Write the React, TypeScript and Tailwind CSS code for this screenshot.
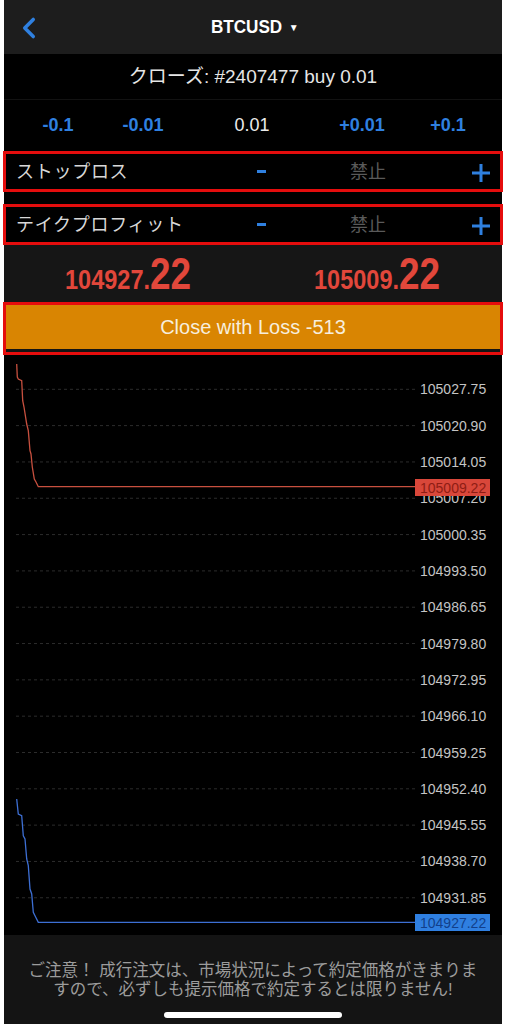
import { ChevronLeft } from 'lucide-react';

const jp = { fontFamily: '"Liberation Sans", "Noto Sans CJK JP", sans-serif' };
const sans = { fontFamily: '"Liberation Sans", Arial, sans-serif' };

const axis = [
  '105027.75', '105020.90', '105014.05', '105007.20', '105000.35',
  '104993.50', '104986.65', '104979.80', '104972.95', '104966.10',
  '104959.25', '104952.40', '104945.55', '104938.70', '104931.85',
];

const askLine = '12.7,9 13.3,22 14.3,24 17.7,25.7 18.7,45.7 20,52 22.7,69 24.3,75.7 26,95.7 27,99 28.3,112 30.3,124 32,127 34.3,131.7 411,131.7';
const bidLine = '12.7,444 14.3,459 17.7,460.7 19.3,480.7 21,484 22.7,504 24.3,510.7 26,534 27.7,539 29.3,557.3 31,560.7 34.3,567.3 411,567.3';

function PlusIcon() {
  return (
    <svg width="18" height="18" viewBox="0 0 18 18">
      <rect x="0" y="7.5" width="18" height="3" fill="#2f80e0" />
      <rect x="7.5" y="0" width="3" height="18" fill="#2f80e0" />
    </svg>
  );
}

function StepRow({ label }: { label: string }) {
  // framed SL / TP row
  return (
    <div className="grid grid-cols-[235px_40px_37px_100px_44px_38px] items-center h-[41px] border-[3px] border-[#e50d0d] bg-black -mx-[1px]">
      <span className="pl-[10px] pt-[2px] text-[18px] tracking-[0.04em] text-[#d8d8d8]" style={jp}>{label}</span>
      <span className="flex justify-center"><span className="block w-[9px] h-[3px] bg-[#2f80e0]" /></span>
      <span />
      <span className="text-center pt-[2px] text-[18px] text-[#5a5a5a]" style={jp}>禁止</span>
      <span />
      <span className="flex justify-center pt-[2px]"><PlusIcon /></span>
    </div>
  );
}

function Price({ main, tail }: { main: string; tail: string }) {
  return (
    <div className="flex justify-center">
      <div className="flex items-baseline scale-x-[0.84] text-[#e2473b] font-bold" style={sans}>
        <span className="text-[28px] leading-none">{main}</span>
        <span className="text-[44px] leading-none">{tail}</span>
      </div>
    </div>
  );
}

function Chart() {
  return (
    <svg width="498" height="580" viewBox="0 0 498 580" className="block">
      {axis.map((v, i) => {
        const y = 34.3 + 36.32 * i;
        return (
          <g key={v}>
            <line x1="12" x2="411" y1={y} y2={y} stroke="#2c2c2c" strokeWidth="1" strokeDasharray="3 3" />
            <text x="416" y={y + 5} fontSize="14" fill="#c4c4c4" fontFamily="Liberation Sans, sans-serif">{v}</text>
          </g>
        );
      })}
      <polyline points={askLine} fill="none" stroke="#c8503f" strokeWidth="1.3" />
      <polyline points={bidLine} fill="none" stroke="#3d6fd4" strokeWidth="1.3" />
      <rect x="411" y="124" width="75" height="17" fill="#d9473a" />
      <text x="416" y="137.5" fontSize="14" fill="#8e1d14" fontFamily="Liberation Sans, sans-serif">105009.22</text>
      <rect x="411" y="559" width="75" height="17" fill="#2f7fe0" />
      <text x="416" y="572.5" fontSize="14" fill="#123f8a" fontFamily="Liberation Sans, sans-serif">104927.22</text>
    </svg>
  );
}

export default function App() {
  return (
    <div className="w-[506px] h-[1024px] bg-white px-[4px] overflow-hidden">
      <div className="h-full flex flex-col bg-black">
        {/* header */}
        <div className="relative h-[54px] bg-[#1d1d1d] flex items-center justify-center">
          <ChevronLeft className="absolute left-[8px] top-[11px]" size={34} strokeWidth={2.5} color="#2f80e0" />
          <span className="inline-block scale-x-[0.9] text-[19px] font-bold text-white" style={sans}>BTCUSD</span>
          <span className="ml-[2px] text-[10px] text-white" style={jp}>▼</span>
        </div>

        <div className="h-[46px] flex items-center justify-center pt-[2px] text-[19px] text-[#e6e6e6] border-b border-[#121212]" style={jp}>
          クローズ: #2407477 buy 0.01
        </div>

        {/* volume steps */}
        <div className="h-[51px] grid grid-cols-[108px_62px_156px_64px_108px] items-center text-center text-[18px]" style={jp}>
          <span className="font-bold text-[#2f80e0]">-0.1</span>
          <span className="font-bold text-[#2f80e0]">-0.01</span>
          <span className="text-[#ececec]">0.01</span>
          <span className="font-bold text-[#2f80e0]">+0.01</span>
          <span className="font-bold text-[#2f80e0]">+0.1</span>
        </div>

        <div className="flex flex-col gap-[12px]">
          <StepRow label="ストップロス" />
          <StepRow label="テイクプロフィット" />
        </div>

        <div className="h-[57px] grid grid-cols-2 items-center bg-[#161616]">
          <Price main="104927." tail="22" />
          <Price main="105009." tail="22" />
        </div>

        <div className="h-[53px] -mx-[1px] border-[3px] border-[#e50d0d] bg-[#141414]">
          <div className="h-[44px] bg-[#d98502] flex items-center justify-center text-[20px] text-[#f7eedd]" style={jp}>
            Close with Loss -513
          </div>
        </div>

        <div className="h-[580px] bg-black">
          <Chart />
        </div>

        {/* warning footer */}
        <div className="flex-1 bg-[#141414] flex flex-col items-center pt-[26px]">
          <p className="text-center text-[16.5px] leading-[19px] text-[#9c9c9c]" style={jp}>
            ご注意！ 成行注文は、市場状況によって約定価格がきまりま<br />すので、必ずしも提示価格で約定するとは限りません!
          </p>
          <div className="mt-[13px] w-[178px] h-[6px] rounded-full bg-white" />
        </div>
      </div>
    </div>
  );
}
